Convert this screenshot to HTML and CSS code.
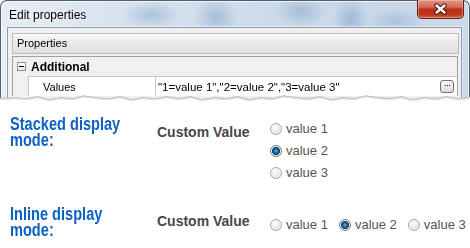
FILE: index.html
```html
<!DOCTYPE html>
<html lang="en">

<head>
    <meta charset="UTF-8" />
    <title>Radio display modes</title>
    <link rel="stylesheet" href="styles.css">
</head>

<body>
    <div class="shot">
        <div class="win">
            <div class="titlebar">
                <span class="title">Edit properties</span>
                <span class="close">
                    <svg width="15" height="12" viewBox="0 0 15 12">
                        <path d="M3.5 2.5L11.5 9.5M11.5 2.5L3.5 9.5" stroke="#3b1710" stroke-width="4.4" stroke-linecap="round" />
                        <path d="M3.5 2.5L11.5 9.5M11.5 2.5L3.5 9.5" stroke="#fff" stroke-width="2.4" stroke-linecap="round" />
                    </svg>
                </span>
            </div>
            <div class="client">
                <div class="panel-head">Properties</div>
                <div class="grid">
                    <div class="cat"><span class="toggle"></span><b>Additional</b></div>
                    <div class="prop">
                        <span class="gut"></span>
                        <span class="name">Values</span>
                        <span class="val">"1=value 1","2=value 2","3=value 3"<span class="dots">···</span></span>
                    </div>
                </div>
            </div>
        </div>
    </div>

    <div class="demo">
        <div class="mode stacked">
            <h2>Stacked display<br>mode:</h2>
            <div class="label">Custom Value</div>
            <div class="opts">
                <label><span class="radio"></span>value 1</label>
                <label><span class="radio on"></span>value 2</label>
                <label><span class="radio"></span>value 3</label>
            </div>
        </div>
        <div class="mode inline">
            <h2>Inline display<br>mode:</h2>
            <div class="label">Custom Value</div>
            <div class="opts">
                <label><span class="radio"></span>value 1</label>
                <label><span class="radio on"></span>value 2</label>
                <label><span class="radio"></span>value 3</label>
            </div>
        </div>
    </div>
</body>

</html>
```

FILE: styles.css
```css
* {
    box-sizing: border-box
}

body {
    margin: 0;
    background: #fff;
    font-family: "Liberation Sans", Arial, sans-serif;
    color: #000
}

/* dialog screenshot with torn bottom edge */
.shot {
    height: 100px;
    filter: drop-shadow(0 1px 1px rgba(0, 0, 0, .35))
}

.win {
    width: 470px;
    height: 100px;
    border: 1px solid #4f5d6c;
    border-bottom: none;
    border-radius: 7px 7px 0 0;
    background:
        radial-gradient(ellipse 30px 14px at 150px 14px, rgba(110, 150, 195, .4), transparent),
        radial-gradient(ellipse 22px 20px at 215px 16px, rgba(100, 140, 190, .4), transparent),
        radial-gradient(ellipse 26px 16px at 300px 10px, rgba(120, 155, 195, .45), transparent),
        radial-gradient(ellipse 18px 22px at 350px 18px, rgba(95, 135, 185, .4), transparent),
        radial-gradient(ellipse 30px 14px at 395px 20px, rgba(120, 155, 200, .35), transparent),
        linear-gradient(90deg, #e6edf4 0, #d8e3ee 25%, #cbdaea 60%, #c9d9e9 100%);
    box-shadow: inset 1px 1px 0 rgba(255, 255, 255, .7), inset -1px 0 0 rgba(255, 255, 255, .6);
    clip-path: polygon(0 0, 100% 0, 100% 97px, 458px 98px, 447px 96px, 436px 98px, 424px 97px, 412px 99px, 401px 96px, 390px 98px, 378px 97px, 366px 95px, 355px 98px, 343px 97px, 331px 99px, 320px 96px, 308px 98px, 296px 97px, 284px 95px, 273px 98px, 261px 97px, 249px 99px, 238px 96px, 226px 98px, 214px 97px, 202px 99px, 191px 96px, 179px 98px, 167px 96px, 155px 98px, 143px 97px, 132px 99px, 120px 96px, 108px 98px, 96px 97px, 84px 95px, 73px 98px, 61px 97px, 49px 99px, 38px 96px, 26px 98px, 14px 97px, 0 98px)
}

.titlebar {
    display: flex;
    align-items: flex-start;
    height: 26px;
    padding-left: 8px
}

.title {
    margin-top: 7px;
    font-size: 12px;
    line-height: 14px;
    color: #000;
    text-shadow: 0 0 6px rgba(255, 255, 255, .9)
}

.close {
    margin-left: auto;
    margin-right: 5px;
    width: 47px;
    height: 19px;
    margin-top: -1px;
    display: flex;
    align-items: center;
    justify-content: center;
    border: 1px solid #5a1e14;
    border-top: none;
    border-radius: 0 0 5px 5px;
    background: linear-gradient(#e39483, #d26a55 40%, #b92e16 52%, #bd361b 80%, #cf5b40);
    box-shadow: inset 0 0 0 1px rgba(255, 225, 215, .4)
}

.client {
    margin: 0 7px 0 6px;
    height: 80px;
    border: 1px solid #8c9aab;
    box-shadow: 0 0 0 1px rgba(255, 255, 255, .5);
    background: #f0f0f0;
    padding: 5px 2px 0 4px
}

.panel-head {
    height: 21px;
    border: 1px solid #b9b9b9;
    background: linear-gradient(#f7f7f7, #e9e9e9 50%, #e1e1e1);
    box-shadow: inset 0 1px 0 #fff;
    font-size: 11px;
    line-height: 19px;
    padding-left: 4px
}

.grid {
    margin: 2px 1px 0 0;
    border: 1px solid #a0a0a0;
    border-bottom: none;
    background: #f0f0f0;
    height: 40px;
    font-size: 11px
}

.cat {
    display: flex;
    align-items: center;
    height: 19px;
    padding-left: 4px
}

.cat b {
    font-size: 12px;
    margin-left: 5px
}

.toggle {
    position: relative;
    width: 9px;
    height: 9px;
    border: 1px solid #919191;
    background: linear-gradient(#fff, #e8e8e8)
}

.toggle::after {
    content: "";
    position: absolute;
    left: 1px;
    top: 3px;
    width: 5px;
    height: 1px;
    background: #000
}

.prop {
    display: flex;
    height: 20px
}

.gut {
    width: 15px
}

.name,
.val {
    background: #fff;
    border-top: 1px solid #c8c8c8;
    display: flex;
    align-items: center
}

.name {
    width: 128px;
    border-left: 1px solid #c8c8c8;
    border-right: 1px solid #c8c8c8;
    padding-left: 14px
}

.val {
    flex: 1;
    padding-left: 2px;
    font-size: 11.5px
}

.dots {
    margin-left: auto;
    margin-right: 3px;
    width: 14px;
    height: 13px;
    border: 1px solid #707070;
    border-radius: 3px;
    background: linear-gradient(#f6f6f6, #dcdcdc);
    font-size: 9px;
    line-height: 9px;
    text-align: center;
    letter-spacing: -1px;
    color: #000
}

/* radio demo */
.demo {
    padding: 16px 0 0 10px
}

.mode {
    display: grid;
    grid-template-columns: 147px 113px auto
}

/* tight leading, as in the source page */
.mode h2 {
    margin: 0;
    font: 700 18px/16px "Liberation Sans", Arial, sans-serif;
    color: #0c62c4;
    white-space: nowrap;
    transform: scaleX(.81);
    transform-origin: 0 0
}

.label {
    font: 700 14px/18px "Liberation Sans", Arial, sans-serif;
    color: #474747;
    padding-top: 7px
}

.opts {
    font-size: 13px;
    line-height: 22px;
    color: #555;
    padding-top: 2px
}

.opts label {
    display: flex;
    align-items: center;
    gap: 4px
}

.inline {
    margin-top: 22px
}

.inline .label {
    padding-top: 6px
}

.inline .opts {
    display: flex;
    gap: 11px;
    padding-top: 5px
}

.radio {
    width: 12px;
    height: 12px;
    border-radius: 50%;
    border: 1px solid #a8a8a8;
    background: radial-gradient(circle at 40% 35%, #fdfdfd, #e4e4e4 60%, #cfcfcf);
    box-shadow: inset 0 0 0 1px rgba(255, 255, 255, .6)
}

.radio.on {
    background:
        radial-gradient(circle at 50% 50%, #7cc4f0 0, #1f7cc2 1.5px, #0b4f8c 3px, #1d2d40 3.8px, transparent 4.4px),
        radial-gradient(circle at 40% 35%, #fdfdfd, #e4e4e4 60%, #cfcfcf);
    border-color: #7a7a7a
}
```
